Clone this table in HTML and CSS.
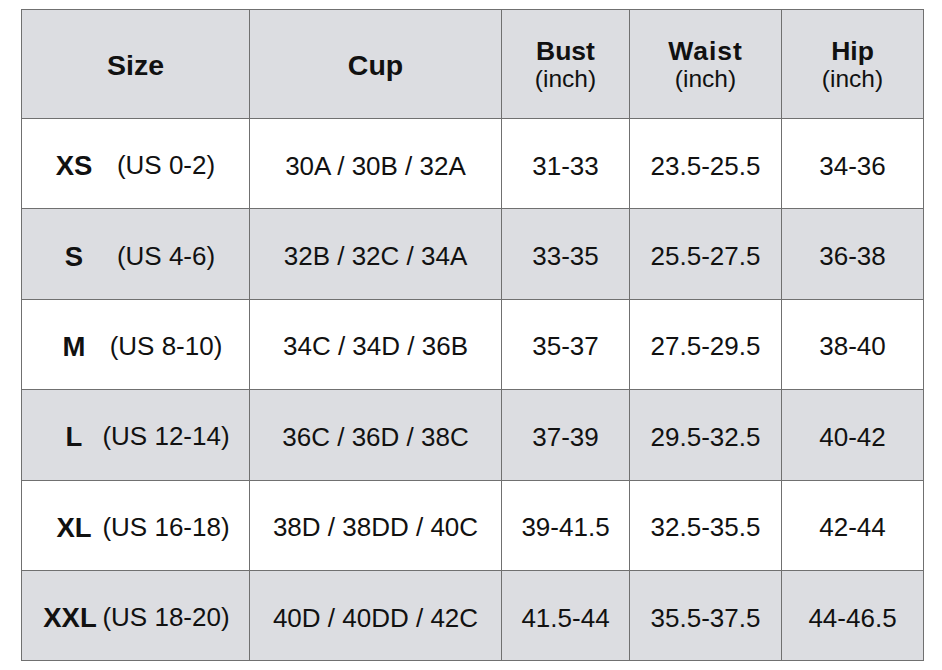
FILE: index.html
```html
<!DOCTYPE html>
<html>
<head>
<meta charset="utf-8">
<link rel="stylesheet" href="styles.css">
</head>
<body>
<table class="chart">
  <colgroup>
    <col class="c-size"><col class="c-cup"><col class="c-bust"><col class="c-waist"><col class="c-hip">
  </colgroup>
  <thead>
    <tr class="head">
      <th><span class="h-main h-big">Size</span></th>
      <th><span class="h-main h-big">Cup</span></th>
      <th><span class="h-main">Bust</span><span class="h-sub">(inch)</span></th>
      <th><span class="h-main h-wide">Waist</span><span class="h-sub">(inch)</span></th>
      <th><span class="h-main">Hip</span><span class="h-sub">(inch)</span></th>
    </tr>
  </thead>
  <tbody>
    <tr class="row light">
      <td><div class="size"><span class="lbl">XS</span><span class="us">(US 0-2)</span></div></td>
      <td>30A / 30B / 32A</td><td>31-33</td><td>23.5-25.5</td><td>34-36</td>
    </tr>
    <tr class="row grey">
      <td><div class="size"><span class="lbl">S</span><span class="us">(US 4-6)</span></div></td>
      <td>32B / 32C / 34A</td><td>33-35</td><td>25.5-27.5</td><td>36-38</td>
    </tr>
    <tr class="row light">
      <td><div class="size"><span class="lbl">M</span><span class="us">(US 8-10)</span></div></td>
      <td>34C / 34D / 36B</td><td>35-37</td><td>27.5-29.5</td><td>38-40</td>
    </tr>
    <tr class="row grey">
      <td><div class="size"><span class="lbl">L</span><span class="us">(US 12-14)</span></div></td>
      <td>36C / 36D / 38C</td><td>37-39</td><td>29.5-32.5</td><td>40-42</td>
    </tr>
    <tr class="row light">
      <td><div class="size"><span class="lbl">XL</span><span class="us">(US 16-18)</span></div></td>
      <td>38D / 38DD / 40C</td><td>39-41.5</td><td>32.5-35.5</td><td>42-44</td>
    </tr>
    <tr class="row grey">
      <td><div class="size"><span class="lbl lbl-wide">XXL</span><span class="us">(US 18-20)</span></div></td>
      <td>40D / 40DD / 42C</td><td>41.5-44</td><td>35.5-37.5</td><td>44-46.5</td>
    </tr>
  </tbody>
</table>
</body>
</html>
```
FILE: styles.css
```css
html, body {
  margin: 0;
  padding: 0;
  background: #ffffff;
}

body {
  font-family: "Liberation Sans", Arial, sans-serif;
  color: #111111;
}

.chart {
  margin: 9px 0 0 21px;
  width: 902px;
  table-layout: fixed;
  border-collapse: collapse;
}

.c-size { width: 228px; }
.c-cup { width: 252px; }
.c-bust { width: 128px; }
.c-waist { width: 152px; }
.c-hip { width: 142px; }

.chart th,
.chart td {
  border: 1px solid #707070;
  padding: 0;
  text-align: center;
  vertical-align: middle;
}

.head {
  height: 109px;
  background: #dcdde1;
}

.head th {
  padding-top: 1px;
}

.h-main {
  display: block;
  font-size: 26.5px;
  font-weight: bold;
  line-height: 30px;
}

.h-big {
  font-size: 28.5px;
  line-height: 32px;
}

.h-wide {
  letter-spacing: 1px;
}

.h-sub {
  display: block;
  font-size: 24.5px;
  font-weight: normal;
  line-height: 28px;
  margin-top: -1px;
}

.row {
  height: 90.4px;
}

.row td {
  font-size: 26px;
  padding-top: 5px;
}

.light { background: #ffffff; }
.grey { background: #dcdde1; }

.size {
  display: flex;
  margin-left: -1px;
}

.lbl {
  display: flex;
  justify-content: center;
  width: 106px;
  font-weight: bold;
  font-size: 27.5px;
}

.lbl-wide {
  margin-left: -4px;
  margin-right: 4px;
}

.us {
  display: flex;
  justify-content: center;
  width: 78px;
  white-space: nowrap;
}
```
